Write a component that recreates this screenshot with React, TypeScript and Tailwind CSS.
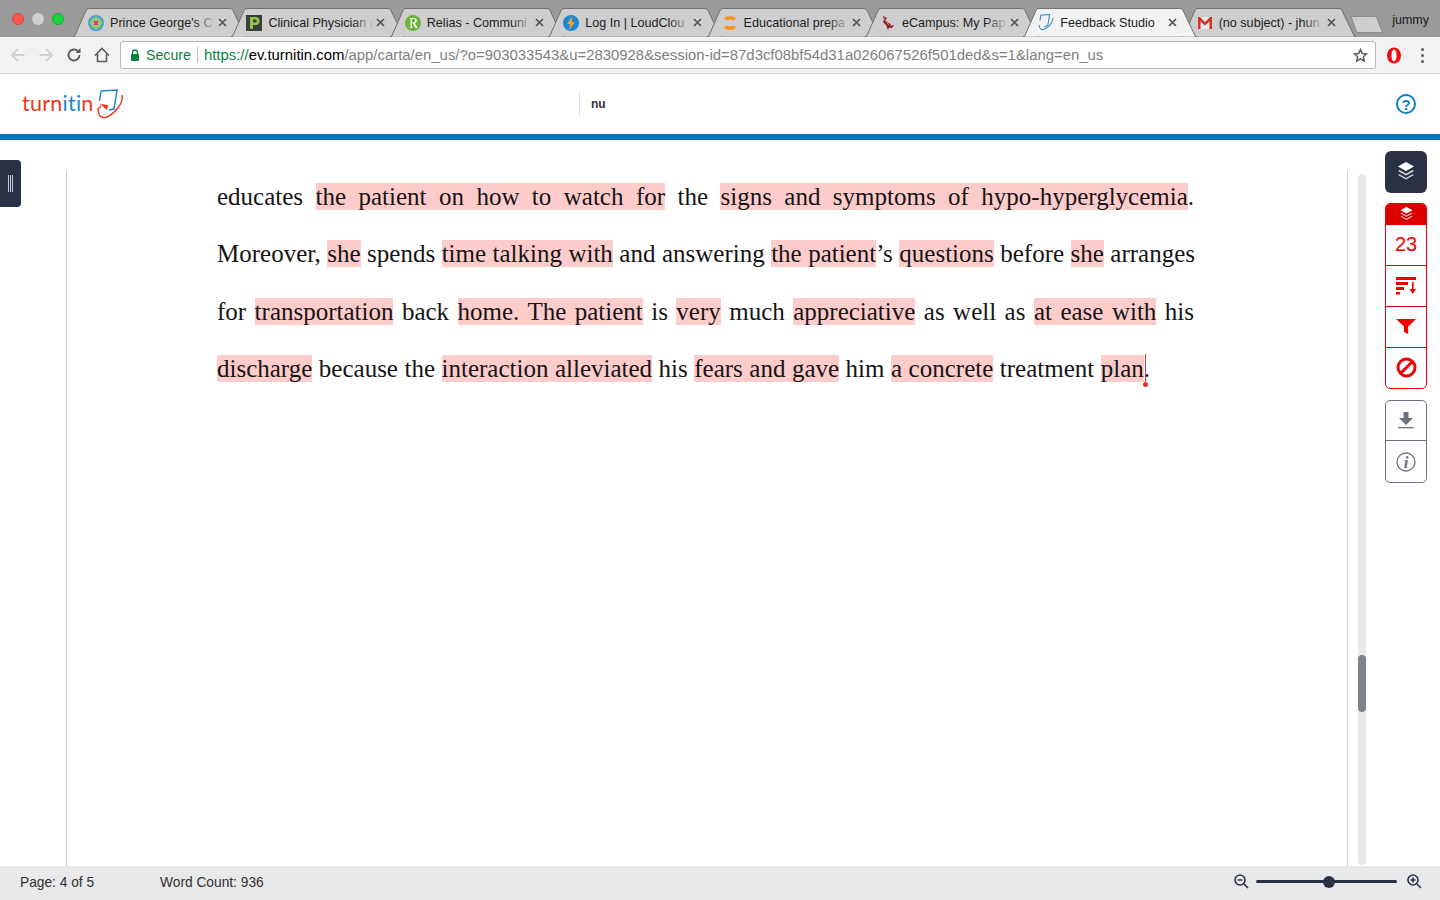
import React from "react";

const sans = { fontFamily: '"Liberation Sans", Arial, sans-serif' };

function Fav({ k }: { k: string }) {
  if (k === "pg")
    return (
      <svg width="16" height="16" viewBox="0 0 16 16">
        <circle cx="8" cy="8" r="8" fill="#4a9ad4" />
        <circle cx="8" cy="8" r="6" fill="#7ecb6a" />
        <circle cx="8" cy="8" r="3.600" fill="#a9dc7c" />
        <rect x="5.800" y="5.800" width="4.400" height="4.400" fill="#e0186a" />
        <path d="M8 0v16M0 8h16" stroke="#dff3d0" strokeWidth=".5" opacity=".6" />
      </svg>
    );
  if (k === "p")
    return (
      <svg width="16" height="16" viewBox="0 0 16 16">
        <rect width="16" height="16" fill="#3b3f3c" />
        <path d="M4 2h5.500a3.600 3.600 0 0 1 0 8H7v4H4z M7 4.600v3h2.200a1.500 1.500 0 0 0 0-3z" fill="#8ec43f" fillRule="evenodd" />
      </svg>
    );
  if (k === "r")
    return (
      <svg width="16" height="16" viewBox="0 0 16 16">
        <circle cx="8" cy="8" r="8" fill="#6cb33f" />
        <path d="M4.500 3h4.300c1.900 0 3 1 3 2.500 0 1.300-.9 2.100-2 2.400L12.500 13h-2L7.900 8.200H7V12.500l1 .5H4.500l1-.5v-9zM7 3.800v3.700h1.300c1.200 0 1.900-.7 1.900-1.900 0-1.100-.7-1.800-1.900-1.800z" fill="#fff" fillRule="evenodd" />
      </svg>
    );
  if (k === "l")
    return (
      <svg width="16" height="16" viewBox="0 0 16 16">
        <circle cx="8" cy="8" r="8" fill="#1c87d6" />
        <path d="M9.500 1 4 9h3.200l-1 6L12 7H8.700z" fill="#f9a11b" />
      </svg>
    );
  if (k === "e")
    return (
      <svg width="16" height="16" viewBox="0 0 16 16">
        <path d="M2 3C4 .5 12 .5 14 3L11.500 5.500C10 4.500 6 4.500 4.500 5.500z" fill="#f7931e" />
        <path d="M2 13C4 15.500 12 15.500 14 13L11.500 10.500C10 11.500 6 11.500 4.500 10.500z" fill="#f7931e" />
      </svg>
    );
  if (k === "c")
    return (
      <svg width="16" height="16" viewBox="0 0 16 16">
        <path d="M3 1 7 3 5.500 5 8 8l3 1-1 2 4-1-2 3-3-.5L8 15 6 10 3 7l1-2z" fill="#8f1d22" />
        <path d="M4 3 6 7l3 3" stroke="#fff" strokeWidth=".8" fill="none" strokeDasharray="1 1" />
      </svg>
    );
  if (k === "t")
    return (
      <svg width="17" height="17" viewBox="0 0 29 31" fill="none" stroke="#3d8fc6" strokeWidth="2">
        <path d="M5 2 21 1l-3 19-7 4" />
        <path d="M5 2 3.500 12" />
        <path d="M27 7c1 8-8 18-16 21-5 2-9-2-9-8" />
      </svg>
    );
  return (
    <svg width="16" height="14" viewBox="0 0 16 14">
      <rect x="1" y="1" width="14" height="12" fill="#e8e8e8" />
      <path d="M1 13V1h2l5 5 5-5h2v12h-2.500V5.500L8 9.500 3.500 5.500V13z" fill="#d0352b" />
    </svg>
  );
}

const tabs = [
  { k: "pg", t: "Prince George's C" },
  { k: "p", t: "Clinical Physician (" },
  { k: "r", t: "Relias - Communi" },
  { k: "l", t: "Log In | LoudClou" },
  { k: "e", t: "Educational prepa" },
  { k: "c", t: "eCampus: My Pap" },
  { k: "t", t: "Feedback Studio", active: true },
  { k: "g", t: "(no subject) - jhun" },
];

function Tab({ k, t, active, first }: { k: string; t: string; active?: boolean; first?: boolean }) {
  const fill = active ? "#f2f2f2" : "#cecece";
  return (
    <div className={`relative h-[29px] w-[174px] shrink-0 ${first ? "" : "-ml-[15.640px]"} ${active ? "z-10" : ""}`}>
      <svg className="absolute inset-0" width="174" height="29" viewBox="0 0 174 29">
        <path d="M0 28.500H1.500L13 2.500Q13.500 .5 16 .5H157Q159 .5 160 2.500L172.500 28.500H174" fill={fill} stroke="#6f6f6f" strokeWidth="1" />
      </svg>
      <div className="relative flex h-full items-center pl-[15px] pr-[15px]">
        <span className="flex w-[16px] shrink-0 items-center justify-center">
          <Fav k={k} />
        </span>
        <span
          className="relative ml-[6px] block w-[106px] overflow-hidden whitespace-nowrap text-[12.600px] leading-[16px] text-[#1c1c1c]"
          style={sans}
        >
          {t}
          {!active && (
            <span className="absolute right-0 top-0 h-full w-[22px] bg-gradient-to-r from-transparent to-[#cecece]" />
          )}
        </span>
        <svg className="ml-auto mr-[5px]" width="9" height="9" viewBox="0 0 9 9" stroke="#555" strokeWidth="1.700">
          <path d="M1 1l7 7M8 1 1 8" />
        </svg>
      </div>
    </div>
  );
}

const H = ({ children }: { children: React.ReactNode }) => <span className="bg-[#ffcccc]">{children}</span>;

function Line({ w, children }: { w: string; children: React.ReactNode }) {
  return <div className={`h-[57.670px] leading-[28px] [text-align-last:justify] text-justify ${w}`}>{children}</div>;
}

const Layers = ({ size, color }: { size: number; color: string }) => (
  <svg width={size} height={size} viewBox="0 0 20 20" fill="none">
    <path d="M10 1 18 5.500 10 10 2 5.500z" fill={color} />
    <path d="M3.500 9 2 9.900l8 4.500 8-4.500L16.500 9 10 12.700z" fill={color} opacity=".8" />
    <path d="M3.500 13.200 2 14.100l8 4.500 8-4.500-1.500-.9L10 16.900z" fill={color} opacity=".8" />
  </svg>
);

export default function App() {
  return (
    <div className="flex h-[900px] w-[1440px] flex-col overflow-hidden bg-white" style={sans}>
      {/* tab strip */}
      <div className="relative flex h-[37px] bg-[#9a9a9a]">
        <div className="flex w-[73px] shrink-0 items-start gap-[8px] pl-[12px] pt-[13px]">
          <span className="h-[12px] w-[12px] rounded-full border border-[#e0443e] bg-[#fc5753]" />
          <span className="h-[12px] w-[12px] rounded-full bg-[#cfcfcf]" />
          <span className="h-[12px] w-[12px] rounded-full border border-[#1aab29] bg-[#19d33b]" />
        </div>
        <div className="flex pt-[8px]">
          {tabs.map((tb, i) => (
            <Tab key={tb.k} k={tb.k} t={tb.t} active={tb.active} first={i === 0} />
          ))}
          <svg className="-ml-[6px] mt-[8px]" width="34" height="17" viewBox="0 0 34 17">
            <path d="M1 .5H25Q26 .5 26.500 1.500L32.500 16.500H8Q7 16.500 6.500 15.500z" fill="#cecece" stroke="#8a8a8a" />
          </svg>
        </div>
        <div className="ml-auto pr-[11px] pt-[13px] text-[12.500px] leading-[14px] text-[#1c1c1c]">jummy</div>
      </div>
      {/* toolbar */}
      <div className="flex h-[37px] items-center border-b border-[#d4d4d4] bg-[#f2f2f2]">
        <div className="flex w-[120px] shrink-0 items-center pl-[10px]">
          <svg width="16" height="16" viewBox="0 0 16 16" fill="none" stroke="#d2d2d2" strokeWidth="1.800">
            <path d="M14.500 8H2M8 2 2 8l6 6" />
          </svg>
          <svg className="ml-[12px]" width="16" height="16" viewBox="0 0 16 16" fill="none" stroke="#d2d2d2" strokeWidth="1.800">
            <path d="M1.500 8H14M8 2l6 6-6 6" />
          </svg>
          <svg className="ml-[12px]" width="16" height="16" viewBox="0 0 16 16" fill="none" stroke="#5c5c5c" strokeWidth="1.900">
            <path d="M13.500 8A5.500 5.500 0 1 1 11.800 4" />
            <path d="M14.500 1v5h-5z" fill="#5c5c5c" stroke="none" />
          </svg>
          <svg className="ml-[12px]" width="16" height="16" viewBox="0 0 16 16" fill="none" stroke="#5c5c5c" strokeWidth="1.600">
            <path d="M1 8.500 8 1.500l7 7M3.500 7v7.500h9V7" />
          </svg>
        </div>
        <div className="flex h-[28px] w-[1256px] items-center rounded-[3px] border border-[#b6b6b6] bg-white pl-[9px] text-[14.200px]">
          <svg width="10" height="12" viewBox="0 0 10 12">
            <path d="M2.500 5V3.500a2.500 2.500 0 0 1 5 0V5" fill="none" stroke="#0b8043" strokeWidth="1.300" />
            <rect x="1" y="5" width="8" height="7" rx="1" fill="#0b8043" />
          </svg>
          <span className="ml-[6px] pt-[1px] text-[#0b8043]">Secure</span>
          <span className="mx-[6px] h-[16px] w-px bg-[#bdbdbd]" />
          <span className="whitespace-nowrap pt-[1px] text-[14.900px]">
            <span className="text-[#0b8043]">https://</span>
            <span className="text-black">ev.turnitin.com</span>
            <span className="text-[#808080]">/app/carta/en_us/?o=903033543&amp;u=2830928&amp;session-id=87d3cf08bf54d31a026067526f501ded&amp;s=1&amp;lang=en_us</span>
          </span>
          <svg className="ml-auto mr-[7px]" width="15" height="15" viewBox="0 0 24 24" fill="none" stroke="#5c5c5c" strokeWidth="2.400">
            <path d="M12 2.500l2.900 6.200 6.700.8-5 4.600 1.400 6.700L12 17.400l-6 3.400 1.400-6.700-5-4.600 6.700-.8z" />
          </svg>
        </div>
        <svg className="ml-[10px]" width="16" height="17" viewBox="0 0 16 17">
          <ellipse cx="8" cy="8.500" rx="7" ry="8" fill="#f40a0a" />
          <ellipse cx="8" cy="8.500" rx="2.600" ry="6" fill="#fff" />
        </svg>
        <span className="ml-[19px] flex flex-col gap-[3px]">
          <span className="h-[3px] w-[3px] rounded-full bg-[#5c5c5c]" />
          <span className="h-[3px] w-[3px] rounded-full bg-[#5c5c5c]" />
          <span className="h-[3px] w-[3px] rounded-full bg-[#5c5c5c]" />
        </span>
      </div>
      {/* header */}
      <div className="flex h-[60px] items-center">
        <div className="flex w-[579px] shrink-0 items-center pl-[22px]">
          <span className="-mt-[3px] w-[74px] whitespace-nowrap text-[21.500px] leading-[24px] tracking-[0.25px] text-[#f0341e]" style={{ fontFamily: "Lato, sans-serif" }}>
            turn<span className="text-[#1d87c9]">iti</span>n
          </span>
          <svg width="29" height="31" viewBox="0 0 29 31" fill="none">
            <path d="M5 2 21 1l-3 19-5 1" stroke="#1d87c9" strokeWidth="1.500" />
            <path d="M5 2 3.500 12" stroke="#1d87c9" strokeWidth="1.500" />
            <path d="M4 15l8 1-1 5z" fill="#f0341e" />
            <path d="M26 6c2 8-7 18-15 22-5 2-9-1-9-8l3-3" stroke="#f0341e" strokeWidth="1.400" />
          </svg>
        </div>
        <div className="flex h-[24px] items-center border-l border-[#dcdcdc] pl-[11px] text-[12px] font-bold text-[#333]">nu</div>
        <svg className="ml-auto mr-[24px]" width="20" height="20" viewBox="0 0 20 20" fill="none">
          <circle cx="10" cy="10" r="9" stroke="#0f7dc2" strokeWidth="2" />
          <text x="10" y="15.500" textAnchor="middle" fontSize="15" fontWeight="700" fill="#0f7dc2" fontFamily="Liberation Sans">?</text>
        </svg>
      </div>
      <div className="h-[6px] bg-[#0076bf]" />
      {/* main */}
      <div className="flex h-[726px] shrink-0">
        <div className="w-[66px] shrink-0 pt-[20px]">
          <div className="flex h-[47px] w-[21px] items-center justify-center gap-[1px] rounded-r-[4px] bg-[#2a3146]">
            <span className="h-[17px] w-px bg-[#c9ccd3]" />
            <span className="h-[17px] w-px bg-[#c9ccd3]" />
            <span className="h-[17px] w-px bg-[#c9ccd3]" />
          </div>
        </div>
        <div className="mt-[30px] w-[1282px] shrink-0 border-x border-[#cfcfcf] pl-[150px] pt-[13px]">
          <div className="-mt-[0.500px] text-[25px] text-[#141414]" style={{ fontFamily: '"Liberation Serif", "Times New Roman", serif' }}>
            <Line w="w-[977px]">
              educates <H>the patient on how to watch for</H> the <H>signs and symptoms of hypo-hyperglycemia</H>.
            </Line>
            <Line w="w-[978px]">
              Moreover, <H>she</H> spends <H>time talking with</H> and answering <H>the patient</H>’s <H>questions</H> before <H>she</H> arranges
            </Line>
            <Line w="w-[977px]">
              for <H>transportation</H> back <H>home. The patient</H> is <H>very</H> much <H>appreciative</H> as well as <H>at ease with</H> his
            </Line>
            <div className="relative h-[28px] w-[933px] leading-[28px] [text-align-last:justify]">
              <H>discharge</H> because the <H>interaction alleviated</H> his <H>fears and gave</H> him <H>a concrete</H> treatment <H>plan</H>.
              <span className="absolute right-[4px] -top-[1px] h-[30px] w-px bg-[#f03030]" />
              <span className="absolute right-[2px] top-[27px] h-[5px] w-[5px] rounded-full bg-[#f03030]" />
            </div>
          </div>
        </div>
        <div className="w-[37px] shrink-0 pl-[10px] pt-[34px]">
          <div className="flex h-[691px] w-[8px] flex-col rounded-full bg-[#e8e9eb] pt-[481px]">
            <div className="h-[57px] w-[8px] rounded-full bg-[#7d838c]" />
          </div>
        </div>
        <div className="w-[42px] shrink-0 pt-[11px]">
          <div className="flex h-[42px] w-[42px] items-center justify-center rounded-[6px] bg-[#2a3146] pb-[3px]">
            <Layers size={20} color="#fff" />
          </div>
          <div className="mt-[10px] flex h-[186px] w-[42px] flex-col overflow-hidden rounded-[5px] border border-[#e80000] text-[#f00000]">
            <div className="flex h-[21px] shrink-0 items-center justify-center bg-[#dc0000] pb-[2px]">
              <Layers size={15} color="#fff" />
            </div>
            <div className="flex h-[41px] items-center justify-center border-b border-[#e80000] pb-[2px] text-[20px]">23</div>
            <div className="flex h-[41px] items-center justify-center border-b border-[#e80000] pb-[2px]">
              <svg width="21" height="19" viewBox="0 0 21 19" fill="#f00000">
                <rect x="0" y="1" width="20" height="3" />
                <rect x="0" y="6" width="12" height="3" />
                <rect x="0" y="11" width="8" height="3" />
                <rect x="0" y="16" width="4" height="2.500" />
                <rect x="16" y="6" width="1.600" height="8" />
                <path d="M13.500 13h6.500l-3.200 5z" />
              </svg>
            </div>
            <div className="flex h-[41px] items-center justify-center border-b border-[#e80000] pb-[2px]">
              <svg width="20" height="17" viewBox="0 0 20 17" fill="#f00000">
                <path d="M0 1h20l-7.800 7.500V16L8 14V8.500z" />
              </svg>
            </div>
            <div className="flex flex-1 items-center justify-center pb-[2px]">
              <svg width="21" height="21" viewBox="0 0 21 21" fill="none" stroke="#f00000" strokeWidth="3">
                <circle cx="10.500" cy="10.500" r="8.500" />
                <path d="M4.500 16.500l12-12" />
              </svg>
            </div>
          </div>
          <div className="mt-[11px] flex h-[83px] w-[42px] flex-col rounded-[5px] border border-[#6b7180]">
            <div className="flex h-[40px] shrink-0 items-center justify-center border-b border-[#6b7180] pb-[2px]">
              <svg width="16" height="18" viewBox="0 0 16 18" fill="#6b7180">
                <path d="M5.500 1h5v6H15l-7 7-7-7h4.500z" />
                <rect x="0" y="16" width="16" height="1.300" />
              </svg>
            </div>
            <div className="flex flex-1 items-center justify-center">
              <svg width="20" height="20" viewBox="0 0 20 20" fill="none">
                <circle cx="10" cy="10" r="9" stroke="#6b7180" strokeWidth="1.300" />
                <text x="10" y="15.500" textAnchor="middle" fontSize="17" fontStyle="italic" fontWeight="700" fill="#6b7180" fontFamily="Liberation Serif">i</text>
              </svg>
            </div>
          </div>
        </div>
      </div>
      {/* footer */}
      <div className="flex h-[34px] shrink-0 items-center bg-[#e8e9eb] pl-[20px] text-[13.750px] text-[#2f2f2f]">
        <span className="w-[140px]">Page: 4 of 5</span>
        <span>Word Count: 936</span>
        <div className="ml-auto flex items-center pb-[3px] pr-[18px]">
          <svg width="15" height="15" viewBox="0 0 15 15" fill="none" stroke="#2a3146" strokeWidth="1.600">
            <circle cx="6" cy="6" r="5" />
            <path d="M3.500 6h5M10 10l4 4" />
          </svg>
          <div className="ml-[7px] flex h-[3px] w-[141px] items-center rounded-full bg-[#2a3146]">
            <span className="ml-[67px] h-[12px] w-[12px] rounded-full bg-[#2a3146]" />
          </div>
          <svg className="ml-[10px]" width="15" height="15" viewBox="0 0 15 15" fill="none" stroke="#2a3146" strokeWidth="1.600">
            <circle cx="6" cy="6" r="5" />
            <path d="M3.500 6h5M6 3.500v5M10 10l4 4" />
          </svg>
        </div>
      </div>
    </div>
  );
}
